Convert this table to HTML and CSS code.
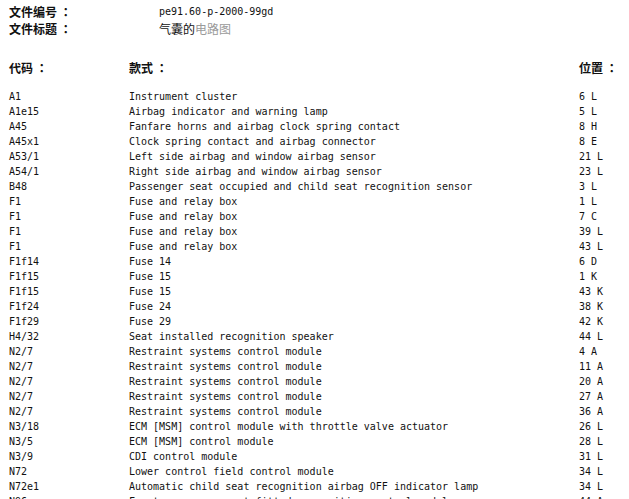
FILE: index.html
```html
<!DOCTYPE html>
<html lang="zh">
<head>
  <meta charset="UTF-8">
  <title>气囊的电路图</title>
  <link rel="stylesheet" href="styles.css">
</head>
<body>
  <div class="doc-info">
    <div class="info-row">
      <span class="info-label" lang="ja">文件编号 ：</span>
      <span class="info-value">pe91.60-p-2000-99gd</span>
    </div>
    <div class="info-row">
      <span class="info-label" lang="ja">文件标题 ：</span>
      <span class="info-value cjk">气囊的<span class="muted">电路图</span></span>
    </div>
  </div>

  <div class="parts">
    <div class="part head" lang="ja">
      <span>代码 ：</span>
      <span>款式 ：</span>
      <span>位置 ：</span>
    </div>

    <div class="part"><span>A1</span><span>Instrument cluster</span><span>6 L</span></div>
    <div class="part"><span>A1e15</span><span>Airbag indicator and warning lamp</span><span>5 L</span></div>
    <div class="part"><span>A45</span><span>Fanfare horns and airbag clock spring contact</span><span>8 H</span></div>
    <div class="part"><span>A45x1</span><span>Clock spring contact and airbag connector</span><span>8 E</span></div>
    <div class="part"><span>A53/1</span><span>Left side airbag and window airbag sensor</span><span>21 L</span></div>
    <div class="part"><span>A54/1</span><span>Right side airbag and window airbag sensor</span><span>23 L</span></div>
    <div class="part"><span>B48</span><span>Passenger seat occupied and child seat recognition sensor</span><span>3 L</span></div>
    <div class="part"><span>F1</span><span>Fuse and relay box</span><span>1 L</span></div>
    <div class="part"><span>F1</span><span>Fuse and relay box</span><span>7 C</span></div>
    <div class="part"><span>F1</span><span>Fuse and relay box</span><span>39 L</span></div>
    <div class="part"><span>F1</span><span>Fuse and relay box</span><span>43 L</span></div>
    <div class="part"><span>F1f14</span><span>Fuse 14</span><span>6 D</span></div>
    <div class="part"><span>F1f15</span><span>Fuse 15</span><span>1 K</span></div>
    <div class="part"><span>F1f15</span><span>Fuse 15</span><span>43 K</span></div>
    <div class="part"><span>F1f24</span><span>Fuse 24</span><span>38 K</span></div>
    <div class="part"><span>F1f29</span><span>Fuse 29</span><span>42 K</span></div>
    <div class="part"><span>H4/32</span><span>Seat installed recognition speaker</span><span>44 L</span></div>
    <div class="part"><span>N2/7</span><span>Restraint systems control module</span><span>4 A</span></div>
    <div class="part"><span>N2/7</span><span>Restraint systems control module</span><span>11 A</span></div>
    <div class="part"><span>N2/7</span><span>Restraint systems control module</span><span>20 A</span></div>
    <div class="part"><span>N2/7</span><span>Restraint systems control module</span><span>27 A</span></div>
    <div class="part"><span>N2/7</span><span>Restraint systems control module</span><span>36 A</span></div>
    <div class="part"><span>N3/18</span><span>ECM [MSM] control module with throttle valve actuator</span><span>26 L</span></div>
    <div class="part"><span>N3/5</span><span>ECM [MSM] control module</span><span>28 L</span></div>
    <div class="part"><span>N3/9</span><span>CDI control module</span><span>31 L</span></div>
    <div class="part"><span>N72</span><span>Lower control field control module</span><span>34 L</span></div>
    <div class="part"><span>N72e1</span><span>Automatic child seat recognition airbag OFF indicator lamp</span><span>34 L</span></div>
    <div class="part"><span>N96</span><span>Front passenger seat fitted recognition control module</span><span>44 A</span></div>
  </div>
</body>
</html>
```

FILE: styles.css
```css
body {
  margin: 0;
  padding: 3px 0 0 9px;
  background: #ffffff;
  color: #111111;
  font-family: "DejaVu Sans Mono", "Liberation Mono", monospace;
  font-size: 10px;
  overflow: hidden;
}

.doc-info {
  margin-bottom: 22px;
}

.info-row {
  display: grid;
  grid-template-columns: 150px auto;
  height: 17px;
  line-height: 17px;
}

.info-label,
.head span {
  font-family: "Noto Sans CJK JP", "Noto Sans CJK SC", sans-serif;
  font-size: 12px;
  font-weight: bold;
  white-space: pre;
}

.cjk {
  font-family: "Noto Sans CJK SC", sans-serif;
  font-size: 12px;
}

.muted {
  color: #9a9a9a;
}

.part {
  display: grid;
  grid-template-columns: 120px 450px auto;
  height: 15px;
  line-height: 15px;
  white-space: nowrap;
}

.part.head {
  height: 30px;
  line-height: 18px;
}
```
